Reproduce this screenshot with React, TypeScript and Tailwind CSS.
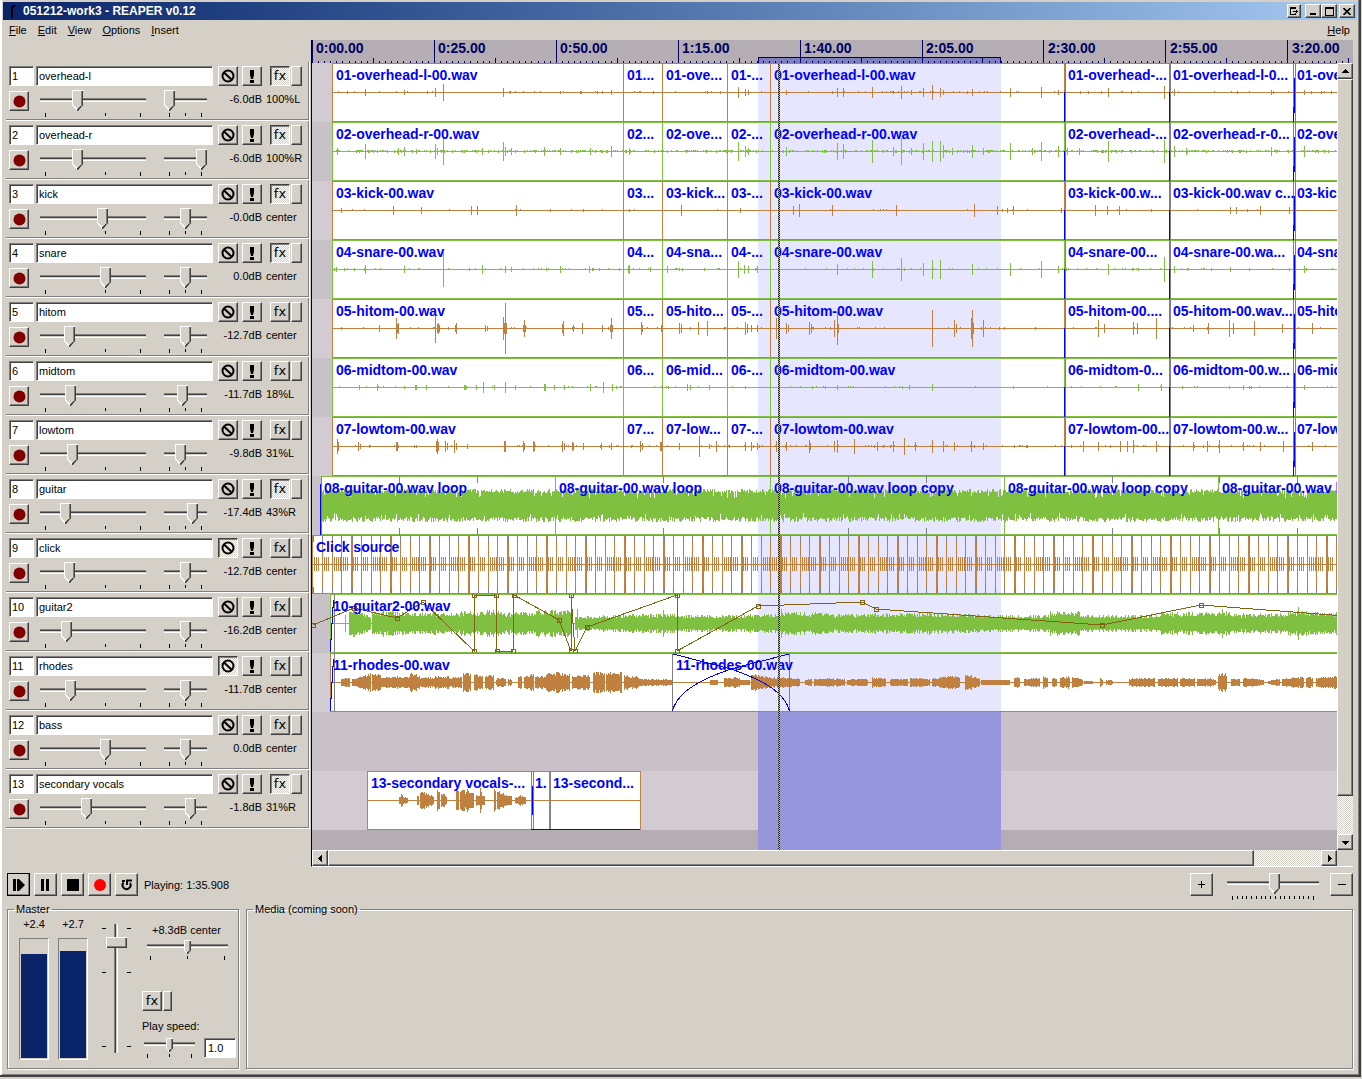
import { useState } from "react";
import type { ButtonHTMLAttributes, InputHTMLAttributes, ReactNode } from "react";
import clsx from "clsx";

const ORANGE = "#c08040";
const GREEN = "#80c040";
const BLUE = "#0000ff";
const GREY = "#808080";
const NAVY = "#000060";
const ENVELOPE = "#806414";

// All timeline x values are window pixels, the canvas begins at ORIGIN.
const ORIGIN = 312;
const MID = 29;
const LANE = 59;
const SEL_START = 758;
const SEL_END = 1001;

const raised =
  "border border-t-white border-l-white border-r-[#404040] border-b-[#404040] shadow-[inset_-1px_-1px_0_#808080] bg-[#d4d0c8]";
const pressed =
  "border border-t-[#404040] border-l-[#404040] border-r-white border-b-white shadow-[inset_1px_1px_0_#808080] bg-[repeating-conic-gradient(#ffffff_0_25%,#d4d0c8_0_50%)] bg-[length:2px_2px]";
const hatch = "bg-[repeating-conic-gradient(#ffffff_0_25%,#d4d0c8_0_50%)] bg-[length:2px_2px]";
const sunken =
  "border border-t-[#808080] border-l-[#808080] border-r-white border-b-white shadow-[inset_1px_1px_0_#404040] bg-white";

type Bar = [x: number, amp: number];
type Segment = [from: number, to: number, startAmp: number, endAmp: number];
type Label = [x: number, text: string];

interface Track {
  name: string;
  db: string;
  pan: string;
  vol: number;
  panPos: number;
  fx?: boolean;
  muted?: boolean;
}

const tracks: Track[] = [
  { name: "overhead-l", db: "-6.0dB", pan: "100%L", vol: 32, panPos: 0, fx: true },
  { name: "overhead-r", db: "-6.0dB", pan: "100%R", vol: 32, panPos: 32, fx: true },
  { name: "kick", db: "-0.0dB", pan: "center", vol: 57, panPos: 16, fx: true },
  { name: "snare", db: "0.0dB", pan: "center", vol: 60, panPos: 16, fx: true },
  { name: "hitom", db: "-12.7dB", pan: "center", vol: 24, panPos: 16 },
  { name: "midtom", db: "-11.7dB", pan: "18%L", vol: 25, panPos: 13 },
  { name: "lowtom", db: "-9.8dB", pan: "31%L", vol: 27, panPos: 11 },
  { name: "guitar", db: "-17.4dB", pan: "43%R", vol: 20, panPos: 23, fx: true },
  { name: "click", db: "-12.7dB", pan: "center", vol: 24, panPos: 16, muted: true },
  { name: "guitar2", db: "-16.2dB", pan: "center", vol: 21, panPos: 16 },
  { name: "rhodes", db: "-11.7dB", pan: "center", vol: 25, panPos: 16, muted: true },
  { name: "bass", db: "0.0dB", pan: "center", vol: 60, panPos: 16 },
  { name: "secondary vocals", db: "-1.8dB", pan: "31%R", vol: 41, panPos: 21, fx: true },
];

const labelStarts = [336, 627, 666, 731, 774, 1068, 1173, 1297];

const drumLabels: string[][] = [
  ["01-overhead-l-00.wav", "01...", "01-ove...", "01-...", "01-overhead-l-00.wav", "01-overhead-...", "01-overhead-l-0...", "01-overhead"],
  ["02-overhead-r-00.wav", "02...", "02-ove...", "02-...", "02-overhead-r-00.wav", "02-overhead-...", "02-overhead-r-0...", "02-overhead"],
  ["03-kick-00.wav", "03...", "03-kick...", "03-...", "03-kick-00.wav", "03-kick-00.w...", "03-kick-00.wav c...", "03-kick-00"],
  ["04-snare-00.wav", "04...", "04-sna...", "04-...", "04-snare-00.wav", "04-snare-00...", "04-snare-00.wa...", "04-snare-00"],
  ["05-hitom-00.wav", "05...", "05-hito...", "05-...", "05-hitom-00.wav", "05-hitom-00....", "05-hitom-00.wav...", "05-hitom-00"],
  ["06-midtom-00.wav", "06...", "06-mid...", "06-...", "06-midtom-00.wav", "06-midtom-0...", "06-midtom-00.w...", "06-midtom-00"],
  ["07-lowtom-00.wav", "07...", "07-low...", "07-...", "07-lowtom-00.wav", "07-lowtom-00...", "07-lowtom-00.w...", "07-lowtom-00"],
];

const drumBars: Bar[][] = [
  [[365, 3], [404, 2], [435, 4], [443, 8], [503, 4], [611, 2], [738, 5], [745, 3], [748, 2], [786, 2], [837, 4], [843, 4], [872, 5], [901, 6], [911, 2], [923, 4], [932, 7], [940, 4], [943, 2], [972, 3], [1010, 4], [1041, 5], [1058, 2], [1108, 4], [1164, 6], [1174, 3], [1271, 2], [1304, 2]],
  [[337, 3], [365, 7], [398, 3], [404, 4], [416, 2], [435, 7], [437, 3], [443, 13], [482, 3], [503, 9], [505, 4], [511, 3], [544, 4], [560, 3], [590, 3], [611, 5], [629, 3], [738, 9], [745, 5], [748, 3], [786, 4], [837, 8], [843, 7], [872, 11], [893, 4], [901, 13], [911, 3], [923, 8], [932, 10], [940, 10], [943, 6], [952, 3], [972, 6], [983, 3], [1010, 8], [1032, 3], [1041, 9], [1058, 5], [1067, 3], [1079, 3], [1108, 10], [1164, 11], [1174, 5], [1186, 3], [1271, 4], [1304, 5]],
  [[341, 2], [393, 4], [421, 3], [471, 4], [477, 4], [516, 5], [681, 5], [740, 2], [793, 4], [799, 6], [832, 5], [896, 5], [974, 6], [997, 4], [1007, 2], [1013, 4], [1061, 2], [1095, 5], [1107, 4], [1119, 4], [1230, 3], [1236, 3], [1260, 4], [1289, 3]],
  [[336, 2], [365, 4], [404, 3], [443, 17], [482, 4], [505, 3], [511, 2], [560, 3], [589, 3], [628, 3], [629, 4], [650, 2], [667, 3], [738, 8], [744, 4], [748, 3], [757, 3], [837, 5], [872, 8], [901, 11], [923, 6], [932, 9], [940, 9], [972, 5], [1010, 6], [1041, 8], [1058, 3], [1108, 5], [1164, 12], [1174, 3], [1230, 2], [1304, 3]],
  [[379, 3], [396, 10], [397, 4], [398, 5], [435, 14], [437, 4], [438, 5], [439, 3], [455, 3], [456, 5], [485, 3], [487, 2], [503, 11], [504, 5], [505, 25], [506, 5], [523, 3], [524, 8], [525, 3], [562, 4], [563, 7], [573, 3], [582, 5], [602, 3], [610, 3], [611, 10], [612, 3], [641, 6], [642, 3], [661, 3], [679, 5], [681, 4], [698, 6], [707, 7], [745, 6], [747, 4], [751, 3], [757, 3], [776, 10], [786, 5], [788, 3], [809, 6], [811, 4], [834, 8], [837, 16], [838, 4], [932, 18], [954, 8], [956, 4], [971, 10], [972, 18], [973, 5], [983, 8], [1098, 8], [1104, 4], [1133, 6], [1137, 5], [1156, 10], [1193, 3], [1208, 5], [1229, 8], [1233, 5], [1254, 7], [1282, 4], [1312, 5]],
  [[359, 2], [377, 3], [415, 2], [416, 2], [426, 2], [464, 2], [465, 2], [476, 2], [483, 5], [494, 2], [505, 5], [515, 2], [544, 3], [545, 3], [554, 2], [564, 2], [590, 3], [603, 5], [612, 3], [687, 3], [690, 2], [709, 2], [837, 2], [909, 2], [932, 3], [1138, 3], [1161, 3], [1243, 2], [1304, 2]],
  [[337, 7], [338, 4], [358, 4], [360, 2], [396, 4], [397, 4], [436, 5], [437, 7], [438, 4], [445, 5], [447, 3], [454, 6], [456, 3], [467, 2], [504, 5], [505, 5], [523, 5], [524, 3], [533, 5], [534, 4], [562, 5], [564, 3], [572, 4], [573, 3], [583, 3], [601, 3], [611, 3], [640, 5], [642, 3], [660, 4], [661, 4], [679, 3], [699, 10], [709, 2], [716, 5], [745, 4], [751, 4], [757, 3], [776, 5], [786, 4], [809, 6], [810, 3], [834, 5], [837, 6], [854, 7], [877, 4], [893, 5], [904, 8], [915, 4], [932, 6], [943, 5], [954, 4], [971, 5], [983, 3], [1083, 5], [1098, 4], [1120, 5], [1127, 5], [1133, 6], [1156, 5], [1193, 4], [1207, 5], [1219, 6], [1243, 4], [1260, 4], [1283, 5], [1312, 4]],
];

// how often a small bump sits on the centre line of each drum track
const bumpRate = [0.06, 0.4, 0.02, 0.1, 0.05, 0.06, 0.1];

const rhodesSegments: Segment[] = [
  [341, 350, 3, 4], [352, 361, 3, 5], [361, 371, 5, 8], [372, 381, 9, 6], [381, 400, 4, 5], [400, 410, 4, 5],
  [410, 420, 9, 5], [420, 434, 4, 4], [434, 450, 5, 5], [450, 462, 4, 5], [463, 471, 8, 7], [474, 483, 7, 6],
  [485, 494, 6, 7], [496, 506, 3, 4], [508, 512, 3, 3], [518, 522, 6, 4], [524, 534, 5, 8], [535, 546, 6, 5],
  [546, 556, 8, 7], [556, 570, 9, 7], [572, 590, 6, 6], [593, 605, 9, 8], [606, 622, 8, 9], [624, 640, 7, 4],
  [640, 672, 3, 2], [710, 718, 2, 2], [724, 740, 4, 4], [740, 750, 2, 2], [751, 762, 8, 5], [762, 800, 5, 3],
  [805, 812, 2, 3], [814, 845, 3, 3], [847, 868, 2, 3], [872, 886, 4, 3], [890, 908, 3, 3], [910, 930, 4, 3],
  [932, 948, 3, 5], [948, 960, 6, 5], [965, 980, 8, 3], [981, 1010, 2, 2], [1014, 1020, 5, 4], [1024, 1040, 3, 4],
  [1043, 1048, 5, 4], [1052, 1057, 4, 4], [1060, 1070, 4, 5], [1072, 1083, 5, 2], [1084, 1093, 1, 1],
  [1100, 1103, 4, 2], [1106, 1113, 2, 1], [1129, 1155, 3, 4], [1158, 1178, 3, 4], [1180, 1195, 4, 3],
  [1197, 1216, 3, 3], [1218, 1227, 7, 8], [1231, 1240, 3, 3], [1243, 1264, 4, 2], [1268, 1280, 1, 3],
  [1282, 1304, 3, 5], [1306, 1313, 5, 4], [1316, 1338, 4, 5],
];

const vocalSegments: Segment[] = [
  [399, 408, 3, 2], [401, 403, 5, 5], [417, 419, 4, 4], [420, 424, 6, 9], [424, 434, 7, 3], [437, 440, 9, 8],
  [441, 447, 6, 4], [456, 459, 9, 8], [460, 474, 9, 6], [467, 469, 11, 9], [476, 485, 5, 4], [480, 482, 10, 9],
  [494, 496, 10, 9], [497, 512, 8, 3], [515, 526, 2, 4], [519, 521, 5, 4],
];

const guitar2Segments: Segment[] = [
  [349, 356, 10, 10], [356, 371, 9, 5], [372, 385, 8, 10], [385, 420, 9, 8], [420, 460, 8, 8], [460, 505, 9, 10],
  [505, 535, 8, 9], [535, 571, 10, 10], [575, 600, 5, 6], [600, 660, 6, 7], [660, 720, 7, 6], [720, 780, 6, 7],
  [780, 840, 9, 7], [840, 930, 7, 8], [930, 1000, 8, 6], [1000, 1050, 6, 6], [1050, 1080, 9, 9], [1080, 1160, 6, 6],
  [1160, 1230, 8, 9], [1230, 1290, 7, 8], [1290, 1338, 9, 8],
];

const envelopePoints = [
  [313, 31], [354, 14], [397, 24], [423, 8], [474, 57], [474, 1], [496, 1], [497, 57], [513, 57], [514, 1],
  [559, 26], [571, 57], [571, 1], [575, 57], [587, 33], [677, 1], [677, 57], [758, 12], [862, 8], [876, 15],
  [1102, 31], [1201, 11], [1345, 22],
];

function noise(n: number) {
  const s = Math.sin(n * 127.1 + 3.7) * 43758.5453;
  return s - Math.floor(s);
}

function barsPath(bars: Bar[]) {
  return bars.map(([x, a]) => `M${x + 0.5} ${MID - a}v${a * 2 + 1}`).join("");
}

function segmentBars(segments: Segment[], seed: number, jitter = 0.45): Bar[] {
  return segments.flatMap(([from, to, a, b]) =>
    Array.from({ length: to - from }, (_, i): Bar => {
      const amp = a + ((b - a) * i) / (to - from);
      const n = noise(from + i + seed);
      return [from + i, Math.max(1, Math.round(amp * (0.75 + n * jitter)))];
    })
  );
}

function drumPath(index: number) {
  let bumps = "";
  for (let x = 334; x < 1500; x++) {
    const n = noise(x * 3 + index * 977);
    if (n < bumpRate[index]) bumps += `M${x + 0.5} ${MID - 1}v${n < bumpRate[index] / 4 ? 3 : 1}`;
  }
  return bumps + barsPath(drumBars[index]);
}

function densePath(from: number, to: number, amp: number) {
  let d = "";
  for (let x = from; x < to; x++) {
    const up = amp + Math.round(noise(x) * 4 - 1) - (noise(x + 500) < 0.09 ? 5 : 0);
    const down = amp + Math.round(noise(x * 7) * 5 - 1) - (noise(x + 900) < 0.08 ? 4 : 0);
    d += `M${x + 0.5} ${MID - up}V${MID + down}`;
  }
  return d;
}

interface VLineProps {
  x: number;
  color: string;
  from?: number;
  to?: number;
  w?: number;
}

function VLine({ x, color, from = 0, to = LANE, w = 1 }: VLineProps) {
  return <rect x={x} y={from} width={w} height={to - from} fill={color} />;
}

interface LaneProps {
  index: number;
  color?: string;
  start?: number;
  end?: number;
  wave?: string;
  labels?: Label[];
  children?: ReactNode;
}

function Lane({ index, color = ORANGE, start, end = 4000, wave, labels = [], children }: LaneProps) {
  return (
    <div
      className={clsx(
        "relative h-[59px] overflow-hidden",
        index % 2 ? "bg-[#c8c2c8]" : "bg-[#d2ccd2]"
      )}
    >
      <svg className="absolute inset-0 size-full" shapeRendering="crispEdges" aria-hidden="true">
        <g transform={`translate(${-ORIGIN} 0)`}>
          <rect x={SEL_START} width={SEL_END - SEL_START} height={LANE} fill="#9696dc" />
          {start !== undefined && (
            <>
              <rect x={start} width={end - start} height={LANE} fill="#fff" />
              {end > SEL_START && (
                <rect x={SEL_START} width={SEL_END - SEL_START} height={LANE} fill="#e6e6ff" />
              )}
              <rect x={start} width={end - start} height="1" fill={color} />
              <rect x={start} y={LANE - 1} width={end - start} height="1" fill={color} />
              <rect x={start} y={MID} width={end - start} height="1" fill={color} />
              <VLine x={start} color={color} />
              {wave && <path d={wave} stroke={color} fill="none" />}
            </>
          )}
          {children}
        </g>
      </svg>
      {labels.map(([x, text]) => (
        <span
          key={x}
          className="absolute top-1 text-sm leading-4 font-bold whitespace-nowrap text-[#0000ff]"
          style={{ left: x - ORIGIN }}
        >
          {text}
        </span>
      ))}
    </div>
  );
}

function DrumLane({ index }: { index: number }) {
  const color = index % 2 ? GREEN : ORANGE;
  return (
    <Lane
      index={index}
      color={color}
      start={332}
      wave={drumPath(index)}
      labels={drumLabels[index].map((text, i): Label => [labelStarts[i], text])}
    >
      {[623, 662, 727, 770, 1064].map((x) => (
        <VLine key={x} x={x} color={color} />
      ))}
      <VLine x={1065} color={GREY} />
      <VLine x={1064} color={BLUE} from={MID} />
      <VLine x={1169} color={GREY} w={2} />
      <VLine x={1169} color={BLUE} from={MID} />
      <VLine x={1293} color={GREY} />
      <VLine x={1295} color={GREY} />
      <VLine x={1294} color={BLUE} from={15} to={50} />
      <VLine x={1293} color={BLUE} from={44} />
    </Lane>
  );
}

function GuitarLane() {
  return (
    <Lane
      index={7}
      color={GREEN}
      start={321}
      wave={densePath(322, 1500, 13)}
      labels={[
        [324, "08-guitar-00.wav loop"],
        [559, "08-guitar-00.wav loop"],
        [774, "08-guitar-00.wav loop copy"],
        [1008, "08-guitar-00.wav loop copy"],
        [1222, "08-guitar-00.wav loop copy"],
      ]}
    >
      {[399, 477, 663, 848, 926, 1112, 1219, 1297].map((x) => (
        <g key={x}>
          <VLine x={x} color={GREY} to={7} />
          <VLine x={x} color={GREY} from={52} />
        </g>
      ))}
      {[555, 770, 1004, 1218].map((x) => (
        <VLine key={x} x={x} color={GREEN} />
      ))}
      <VLine x={321} color={GREY} to={58} />
      <VLine x={320} color={BLUE} from={8} />
    </Lane>
  );
}

function ClickLane() {
  const beats = Array.from({ length: 130 }, (_, i) => Math.round(312 + i * 9.75));
  return (
    <Lane index={8} start={312} labels={[[316, "Click source"]]}>
      {beats.map((x, i) => {
        const bar = i % 4 === 0;
        return (
          <g key={x}>
            <VLine x={x} color={ORANGE} w={bar && i > 0 ? 2 : 1} />
            <VLine x={bar ? x + 1 : x} color={GREY} from={1} to={7} />
            <VLine x={bar ? x + 1 : x} color={GREY} from={52} to={58} />
            {[2, 4, 6, 8].slice(0, i % 4 === 2 ? 4 : 3).map((dx) => (
              <VLine key={dx} x={x + dx} color={ORANGE} from={22} to={36} />
            ))}
          </g>
        );
      })}
    </Lane>
  );
}

function EnvelopeLane() {
  return (
    <Lane
      index={9}
      color={GREEN}
      start={330}
      wave={barsPath([[345, 8], ...segmentBars(guitar2Segments, 40, 0.6), [577, 14], [663, 13], [781, 14], [1222, 14], [1298, 16]])}
      labels={[[333, "10-guitar2-00.wav"]]}
    >
      <VLine x={334} color={GREY} />
      <path d="M330.5 58V46L331.5 45V30L332.5 29V14L333.5 13V6" stroke={BLUE} fill="none" />
      <polyline points={envelopePoints.map(([x, y]) => `${x},${y}`).join(" ")} stroke={ENVELOPE} fill="none" />
      {envelopePoints.map(([x, y], i) => (
        <rect key={i} x={x - 1.5} y={y - 1.5} width="4" height="4" stroke={ENVELOPE} fill="none" />
      ))}
    </Lane>
  );
}

function RhodesLane() {
  return (
    <Lane
      index={10}
      start={330}
      wave={barsPath(segmentBars(rhodesSegments, 7))}
      labels={[
        [333, "11-rhodes-00.wav"],
        [676, "11-rhodes-00.wav"],
      ]}
    >
      <VLine x={334} color={GREY} />
      <path d="M330.5 58V46L331.5 45V30L332.5 29V14L333.5 13V6" stroke={BLUE} fill="none" />
      <VLine x={672} color={GREY} />
      <VLine x={789} color={GREY} />
      <path d="M672.5 58C678 36 708 24 731 16L789 1" stroke={BLUE} fill="none" />
      <path d="M789.5 58C784 36 754 24 731 16L673 1" stroke={BLUE} fill="none" />
    </Lane>
  );
}

function VocalsLane() {
  return (
    <Lane
      index={12}
      start={367}
      end={641}
      wave={barsPath(segmentBars(vocalSegments, 11))}
      labels={[
        [371, "13-secondary vocals-..."],
        [535, "1."],
        [553, "13-second..."],
      ]}
    >
      <VLine x={640} color={ORANGE} />
      <VLine x={531} color={GREY} />
      <VLine x={533} color={GREY} />
      <VLine x={532} color={BLUE} from={15} to={44} />
      <VLine x={549} color={ORANGE} />
      <VLine x={550} color={GREY} />
      <rect x="531" y={LANE - 1} width="109" height="1" fill={BLUE} />
    </Lane>
  );
}

function Playhead() {
  return (
    <svg
      className="pointer-events-none absolute top-0 bottom-0 left-[466px] h-full w-[2px]"
      shapeRendering="crispEdges"
      aria-hidden="true"
    >
      <line x1="0.5" x2="0.5" y1="1" y2="100%" stroke="#202000" strokeDasharray="1 1" />
      <line x1="1.5" x2="1.5" y1="2" y2="100%" stroke="#202000" strokeDasharray="1 1" />
      <line x1="0.5" x2="0.5" y1="2" y2="100%" stroke="#b8b890" strokeDasharray="1 1" />
      <line x1="1.5" x2="1.5" y1="1" y2="100%" stroke="#b8b890" strokeDasharray="1 1" />
    </svg>
  );
}

const marks = ["0:00.00", "0:25.00", "0:50.00", "1:15.00", "1:40.00", "2:05.00", "2:30.00", "2:55.00", "3:20.00"];

function Ruler() {
  return (
    <div className="relative flex h-[23px] overflow-hidden bg-[#b4aeb4] text-[#000060]">
      <svg className="absolute inset-0 size-full" shapeRendering="crispEdges" aria-hidden="true">
        <rect x={SEL_START - ORIGIN} y="17" width={SEL_END - SEL_START} height="6" fill="#8080c0" />
        <path
          d={`M${SEL_START - ORIGIN + 0.5} 23V17.5H${SEL_END - ORIGIN - 0.5}V23`}
          stroke={NAVY}
          fill="none"
        />
        {Array.from({ length: 340 }, (_, i) => {
          const h = i % 20 === 0 ? 23 : i % 10 === 0 ? 5 : 2;
          return <rect key={i} x={Math.round(i * 6.095)} y={23 - h} width="1" height={h} fill={NAVY} />;
        })}
      </svg>
      {marks.map((mark) => (
        <span key={mark} className="w-[122px] shrink-0 pl-1 text-sm leading-4 font-bold">
          {mark}
        </span>
      ))}
    </div>
  );
}

function Button({
  className,
  active,
  ...props
}: ButtonHTMLAttributes<HTMLButtonElement> & { active?: boolean }) {
  return (
    <button
      type="button"
      className={clsx("flex shrink-0 items-center justify-center p-0", active ? pressed : raised, className)}
      {...props}
    />
  );
}

function Arrow({ d }: { d: string }) {
  return (
    <svg width="7" height="7" shapeRendering="crispEdges" aria-hidden="true">
      <path d={d} />
    </svg>
  );
}

const sliderBase = "m-0 block shrink-0 appearance-none bg-transparent p-0";
const bigSlider =
  "h-[21px] [&::-webkit-slider-runnable-track]:h-[21px] [&::-webkit-slider-runnable-track]:bg-[linear-gradient(transparent_8px,#808080_8px,#808080_9px,#404040_9px,#404040_10px,#d4d0c8_10px,#d4d0c8_11px,#ffffff_11px,#ffffff_12px,transparent_12px)] [&::-webkit-slider-thumb]:appearance-none [&::-webkit-slider-thumb]:h-[21px] [&::-webkit-slider-thumb]:w-[11px] [&::-webkit-slider-thumb]:[clip-path:polygon(0_0,100%_0,100%_15px,6px_100%,5px_100%,0_15px)] [&::-webkit-slider-thumb]:shadow-[inset_1px_1px_0_#ffffff,inset_-1px_0_0_#404040,inset_-2px_0_0_#808080] [&::-webkit-slider-thumb]:[background:linear-gradient(45deg,#ffffff_66%,#d4d0c8_66%)_left_bottom/5px_6px_no-repeat,linear-gradient(-45deg,#404040_66%,#d4d0c8_66%)_right_bottom/6px_6px_no-repeat,#d4d0c8]";
const smallSlider =
  "h-[14px] [&::-webkit-slider-runnable-track]:h-[14px] [&::-webkit-slider-runnable-track]:bg-[linear-gradient(transparent_4px,#808080_4px,#808080_5px,#404040_5px,#404040_6px,#d4d0c8_6px,#d4d0c8_7px,#ffffff_7px,#ffffff_8px,transparent_8px)] [&::-webkit-slider-thumb]:appearance-none [&::-webkit-slider-thumb]:h-[14px] [&::-webkit-slider-thumb]:w-[7px] [&::-webkit-slider-thumb]:[clip-path:polygon(0_0,100%_0,100%_10px,4px_100%,3px_100%,0_10px)] [&::-webkit-slider-thumb]:shadow-[inset_1px_1px_0_#ffffff,inset_-1px_0_0_#404040,inset_-2px_0_0_#808080] [&::-webkit-slider-thumb]:[background:linear-gradient(45deg,#ffffff_70%,#d4d0c8_70%)_left_bottom/3px_4px_no-repeat,linear-gradient(-45deg,#404040_70%,#d4d0c8_70%)_right_bottom/4px_4px_no-repeat,#d4d0c8]";
const faderSlider =
  "h-[129px] w-[21px] [writing-mode:vertical-lr] [direction:rtl] [&::-webkit-slider-runnable-track]:w-[21px] [&::-webkit-slider-runnable-track]:bg-[linear-gradient(to_right,transparent_8px,#808080_8px,#808080_9px,#404040_9px,#404040_10px,#d4d0c8_10px,#d4d0c8_11px,#ffffff_11px,#ffffff_12px,transparent_12px)] [&::-webkit-slider-thumb]:appearance-none [&::-webkit-slider-thumb]:h-[11px] [&::-webkit-slider-thumb]:w-[21px] [&::-webkit-slider-thumb]:bg-[#d4d0c8] [&::-webkit-slider-thumb]:shadow-[inset_1px_1px_0_#ffffff,inset_-1px_-1px_0_#404040,inset_-2px_-2px_0_#808080]";

interface SliderProps extends InputHTMLAttributes<HTMLInputElement> {
  label: string;
  look: string;
  ticks: number[];
  width: number;
}

function Slider({ label, look, ticks, width, className, ...props }: SliderProps) {
  return (
    <div className="flex flex-col gap-[2px]">
      <input type="range" aria-label={label} className={clsx(sliderBase, look, className)} {...props} />
      <svg width={width} height="4" shapeRendering="crispEdges" aria-hidden="true">
        {ticks.map((x, i) => (
          <rect key={x} x={x} width="1" height={i === 0 || i === ticks.length - 1 ? 4 : 3} />
        ))}
      </svg>
    </div>
  );
}

function TrackPanel({ track, number }: { track: Track; number: number }) {
  const [muted, setMuted] = useState(!!track.muted);
  const [solo, setSolo] = useState(false);
  return (
    <div className="flex h-[59px] flex-col gap-1 border-r border-b border-white pt-1 pl-[3px] shadow-[inset_-1px_-1px_0_#808080]">
      <div className="flex h-5">
        <input
          aria-label={`Track ${number} number`}
          defaultValue={number}
          className={clsx(sunken, "mr-[2px] h-5 w-[25px] pl-[2px] text-[11px]")}
        />
        <input
          aria-label={`Track ${number} name`}
          defaultValue={track.name}
          className={clsx(sunken, "mr-[5px] h-5 w-[177px] pl-[2px] text-[11px]")}
        />
        <Button aria-label="Mute" active={muted} onClick={() => setMuted(!muted)} className="mr-1 size-5">
          <svg width="14" height="14" fill="none" stroke="#000" strokeWidth="2" aria-hidden="true">
            <circle cx="7" cy="7" r="5.5" />
            <path d="M3 3.5L11 11" />
          </svg>
        </Button>
        <Button aria-label="Solo" active={solo} onClick={() => setSolo(!solo)} className="mr-2 size-5">
          <svg width="4" height="13" aria-hidden="true">
            <path d="M0 0h4v5l-1 4h-2l-1-4zM0 10h4v3h-4z" />
          </svg>
        </Button>
        <Button active={track.fx} className="mr-px size-5 font-['DejaVu_Sans'] text-[13px]">
          fx
        </Button>
        <Button aria-label="Effects menu" className="h-5 w-[11px]" />
      </div>
      <div className="flex">
        <Button aria-label="Record arm" className="mt-px mr-[11px] size-5">
          <svg width="13" height="13" aria-hidden="true">
            <circle cx="6.5" cy="6.5" r="6" fill="#800000" />
          </svg>
        </Button>
        <Slider
          label={`Track ${number} volume`}
          look={bigSlider}
          className="w-[106px]"
          width={106}
          ticks={[5, 65, 100]}
          max={95}
          defaultValue={track.vol}
        />
        <div className="w-[18px]" />
        <Slider
          label={`Track ${number} pan`}
          look={bigSlider}
          className="w-[43px]"
          width={43}
          ticks={[5, 21, 37]}
          max={32}
          defaultValue={track.panPos}
        />
        <span className="w-[55px] text-right leading-[18px]">{track.db}</span>
        <span className="pl-1 leading-[18px]">{track.pan}</span>
      </div>
    </div>
  );
}

function Timeline() {
  return (
    <div className="flex min-w-0 flex-1 flex-col border-b border-l border-b-white border-l-black">
      <Ruler />
      <div className="flex">
        <div className="relative min-w-0 flex-1 overflow-hidden">
          {drumLabels.map((_, i) => (
            <DrumLane key={i} index={i} />
          ))}
          <GuitarLane />
          <ClickLane />
          <EnvelopeLane />
          <RhodesLane />
          <Lane index={11} />
          <VocalsLane />
          <div className="h-5 bg-[#b4aeb4] pl-[446px]">
            <div className="h-5 w-[243px] bg-[#9696dc]" />
          </div>
          <Playhead />
        </div>
        <div className={clsx("flex w-4 flex-col", hatch)}>
          <Button aria-label="Scroll up" className="h-4 w-4">
            <Arrow d="M3 1h1v1h1v1h1v1h1v1H0V4h1V3h1V2h1z" />
          </Button>
          <div className={clsx("grow-[717]", raised)} />
          <div className="grow-[38]" />
          <Button aria-label="Scroll down" className="h-4 w-4">
            <Arrow d="M0 2h7v1h-1v1h-1v1h-1v1h-1V5H2V4H1V3H0z" />
          </Button>
        </div>
      </div>
      <div className="flex">
        <div className={clsx("flex h-4 flex-1", hatch)}>
          <Button aria-label="Scroll left" className="h-4 w-4">
            <Arrow d="M5 0v7h-1v-1h-1v-1h-1v-1h-1v-1h1v-1h1v-1h1v-1z" />
          </Button>
          <div className={clsx("grow-[926]", raised)} />
          <div className="grow-[67]" />
          <Button aria-label="Scroll right" className="h-4 w-4">
            <Arrow d="M2 0v7h1v-1h1v-1h1v-1h1v-1h-1v-1h-1v-1h-1v-1z" />
          </Button>
        </div>
        <div className="size-4" />
      </div>
    </div>
  );
}

function Transport() {
  return (
    <div className="flex items-start pt-[6px] pl-1 pr-1">
      <div className="flex gap-1">
        <Button aria-label="Play" className="size-[23px] outline outline-1 -outline-offset-1 outline-black">
          <svg width="12" height="12" aria-hidden="true">
            <path d="M0 0h3v12h-3zM4 0h2l6 6l-6 6h-2z" />
          </svg>
        </Button>
        <Button aria-label="Pause" className="size-[23px]">
          <svg width="9" height="12" aria-hidden="true">
            <path d="M0 0h3v12h-3zM5 0h3v12h-3z" />
          </svg>
        </Button>
        <Button aria-label="Stop" className="size-[23px]">
          <svg width="12" height="12" aria-hidden="true">
            <path d="M0 0h12v12h-12z" />
          </svg>
        </Button>
        <Button aria-label="Record" className="size-[23px]">
          <svg width="12" height="12" aria-hidden="true">
            <circle cx="6" cy="6" r="6" fill="#ff0000" />
          </svg>
        </Button>
        <Button aria-label="Repeat" className="size-[23px]">
          <svg width="12" height="12" fill="none" stroke="#000" strokeWidth="2" aria-hidden="true">
            <path d="M2.5 3.5A4 4 0 1 0 9 4M6 6V1.5H11" />
            <path d="M1 2h3" />
          </svg>
        </Button>
      </div>
      <span className="pl-[6px] leading-6">Playing: 1:35.908</span>
      <div className="ml-auto flex items-start">
        <Button aria-label="Zoom in" className="mr-[14px] size-[23px]">
          <svg width="7" height="7" shapeRendering="crispEdges" aria-hidden="true">
            <path d="M3 0h1v3h3v1h-3v3h-1v-3h-3v-1h3z" />
          </svg>
        </Button>
        <Slider
          label="Zoom"
          look={bigSlider}
          className="w-[92px]"
          width={92}
          ticks={Array.from({ length: 18 }, (_, i) => Math.round(5 + i * 4.76))}
          max={81}
          defaultValue={42}
        />
        <Button aria-label="Zoom out" className="ml-[11px] size-[23px]">
          <svg width="8" height="1" shapeRendering="crispEdges" aria-hidden="true">
            <path d="M0 0h8v1h-8z" />
          </svg>
        </Button>
      </div>
    </div>
  );
}

function Meter({ label, level }: { label: string; level: number }) {
  return (
    <div className="flex w-[30px] flex-col items-center gap-2">
      <span className="leading-3">{label}</span>
      <div className="flex h-[122px] w-[30px] items-end border border-t-[#808080] border-l-[#808080] border-r-white border-b-white p-px">
        <div className="w-full bg-[#0a246a]" style={{ height: level }} />
      </div>
    </div>
  );
}

function FaderTicks() {
  return (
    <svg width="4" height="129" shapeRendering="crispEdges" aria-hidden="true">
      <path d="M0 5h4v1H0zM0 49h4v1H0zM0 123h4v1H0z" />
    </svg>
  );
}

const groupBox = "min-w-0 border border-[#808080] shadow-[1px_1px_0_#ffffff,inset_1px_1px_0_#ffffff]";

function MasterPanel() {
  return (
    <fieldset className={clsx(groupBox, "w-[232px] shrink-0 pb-2")}>
      <legend className="ml-[6px] px-[2px] leading-[14px]">Master</legend>
      <div className="flex pt-[2px] pl-[11px]">
        <div className="flex gap-[9px]">
          <Meter label="+2.4" level={104} />
          <Meter label="+2.7" level={107} />
        </div>
        <div className="ml-[14px] flex pt-[5px]">
          <FaderTicks />
          <input
            type="range"
            aria-label="Master volume"
            max={118}
            defaultValue={105}
            className={clsx(sliderBase, faderSlider, "mx-px")}
          />
          <FaderTicks />
        </div>
        <div className="ml-[11px] flex flex-col pt-[6px]">
          <span className="mb-1 pl-[10px] leading-3">+8.3dB center</span>
          <div className="pl-[5px]">
            <Slider
              label="Master pan"
              look={smallSlider}
              className="w-[81px]"
              width={81}
              ticks={[3, 40, 77]}
              max={74}
              defaultValue={37}
            />
          </div>
          <div className="mt-[31px] flex gap-px">
            <Button className="size-5 font-['DejaVu_Sans'] text-[13px]">fx</Button>
            <Button aria-label="Master effects menu" className="h-5 w-[9px]" />
          </div>
          <label htmlFor="play-speed" className="mt-2 mb-[5px] leading-[14px]">
            Play speed:
          </label>
          <div className="flex items-start gap-[9px] pl-[2px]">
            <Slider
              label="Play speed"
              look={smallSlider}
              className="w-[51px]"
              width={51}
              ticks={[3, 25, 47]}
              max={44}
              defaultValue={22}
            />
            <input id="play-speed" defaultValue="1.0" className={clsx(sunken, "h-5 w-8 pl-[3px] text-[11px]")} />
          </div>
        </div>
      </div>
    </fieldset>
  );
}

function TitleBar() {
  return (
    <div className="flex h-[18px] items-center bg-linear-to-r from-[#0a246a] to-[#a6caf0] pr-[2px] pl-2 text-white">
      <svg width="6" height="13" shapeRendering="crispEdges" className="mr-[6px]" aria-hidden="true">
        <path d="M0 1h2v12h-2zM2 0h3v1h-3zM2 1h1v2h-1zM4 1h1v1h-1z" />
      </svg>
      <span className="text-xs font-bold">051212-work3 - REAPER v0.12</span>
      <div className="ml-auto flex">
        <Button aria-label="Dock" className="mr-1 h-[14px] w-[14px]">
          <svg width="8" height="8" fill="none" stroke="#000" shapeRendering="crispEdges" aria-hidden="true">
            <path d="M5.5 2V.5H.5V7.5H5.5V6M0 1.5h6M3 4.5h5M6.5 3v3" />
          </svg>
        </Button>
        <Button aria-label="Minimize" className="h-[14px] w-4 items-end pb-[2px]">
          <svg width="7" height="2" aria-hidden="true">
            <path d="M0 0h6v2H0z" />
          </svg>
        </Button>
        <Button aria-label="Maximize" className="mr-[2px] h-[14px] w-4">
          <svg width="9" height="9" fill="none" stroke="#000" shapeRendering="crispEdges" aria-hidden="true">
            <path d="M.5 .5H8.5V8.5H.5zM0 1.5h9" />
          </svg>
        </Button>
        <Button aria-label="Close" className="h-[14px] w-4">
          <svg width="8" height="7" stroke="#000" strokeWidth="1.6" aria-hidden="true">
            <path d="M.5 0L7.5 7M7.5 0L.5 7" />
          </svg>
        </Button>
      </div>
    </div>
  );
}

function MenuBar() {
  return (
    <nav className="flex h-5 items-center gap-[11px] pr-[7px] pl-[6px]">
      {["File", "Edit", "View", "Options", "Insert", "Help"].map((item) => (
        <button key={item} type="button" className="p-0 last:ml-auto">
          <span className="underline">{item[0]}</span>
          {item.slice(1)}
        </button>
      ))}
    </nav>
  );
}

export default function App() {
  return (
    <div className="min-h-screen bg-[#d4d0c8] pr-px font-['Liberation_Sans',Arial,sans-serif] text-[11px] text-black">
      <div className="flex flex-col border-r-2 border-b-2 border-r-[#404040] border-b-[#404040] pt-[2px] pr-[2px] pl-[3px] shadow-[inset_2px_0_0_#ffffff,inset_-1px_-1px_0_#808080]">
        <TitleBar />
        <MenuBar />
        <div className="flex pr-1">
          <div className="w-[308px] shrink-0 pt-[22px] pr-px pl-[3px]">
            {tracks.map((track, i) => (
              <TrackPanel key={track.name} track={track} number={i + 1} />
            ))}
          </div>
          <Timeline />
        </div>
        <Transport />
        <div className="flex gap-[7px] pt-[2px] pr-1 pb-[6px] pl-1">
          <MasterPanel />
          <fieldset className={clsx(groupBox, "flex-1")}>
            <legend className="ml-[6px] px-[2px] leading-[14px]">Media (coming soon)</legend>
          </fieldset>
        </div>
      </div>
    </div>
  );
}
